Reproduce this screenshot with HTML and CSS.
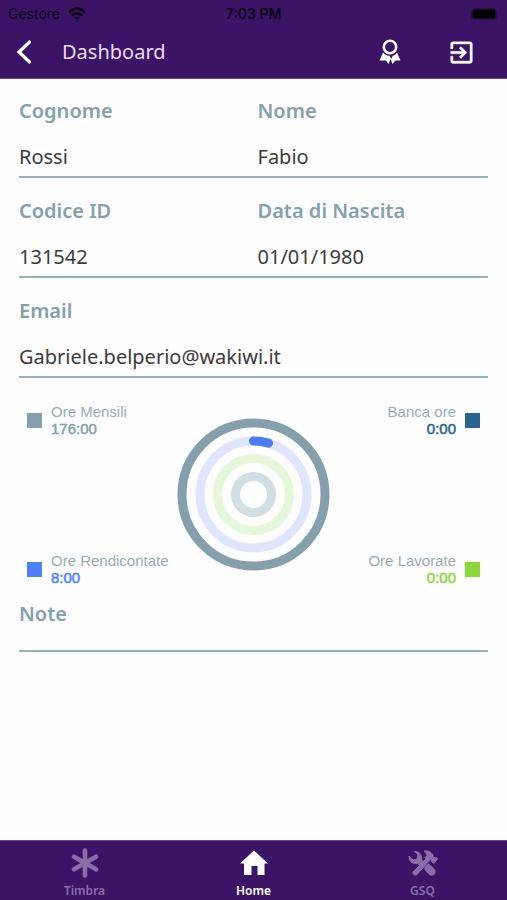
FILE: index.html
```html
<!DOCTYPE html>
<html lang="it">
<head>
<meta charset="utf-8">
<meta name="viewport" content="width=device-width, initial-scale=1">
<title>Dashboard</title>
<link rel="stylesheet" href="styles.css">
</head>
<body>
<header class="top">
  <div class="status">
    <span class="carrier">Gestore
      <svg width="18" height="14" viewBox="0 0 18 14" aria-hidden="true"><g fill="none" stroke="currentColor" stroke-width="2.6"><path d="M1 5.200Q9-2 17 5.200"/><path d="M4 8.600Q9 4 14 8.600"/></g><path d="M6.200 10.500Q9 8.400 11.800 10.500L9 13.400z" fill="currentColor"/></svg>
    </span>
    <span class="clock">7:03 PM</span>
    <span class="power"><svg width="28" height="12" viewBox="0 0 28 12" aria-hidden="true"><rect x=".5" y=".5" width="25" height="11" rx="3" fill="none" stroke="#000" opacity=".3"/><rect x="1.500" y="1.500" width="23" height="9" rx="1.500"/><path d="M26.500 4v4q1.500-2 0-4" opacity=".4"/></svg></span>
  </div>
  <div class="bar">
    <button class="icon-btn" type="button" aria-label="Indietro"><svg width="16" height="26" viewBox="0 0 16 26"><path d="M13.500 3L3 13l10.500 10" fill="none" stroke="#fff" stroke-width="3.200" stroke-linecap="round"/></svg></button>
    <h1>Dashboard</h1>
    <button class="icon-btn" type="button" aria-label="Certificati"><svg width="22" height="26" viewBox="0 0 22 26"><circle cx="11" cy="8" r="6.200" fill="none" stroke="#fff" stroke-width="2.600"/><path d="M4 13.500Q6 16.500 10.500 16.800L12 19.500 9.500 25 7 21.500.500 21.500z M18 13.500Q16.500 16 13.800 16.800L11.800 20.500 13.500 25 16.500 21.500 21.500 21.500z" fill="#fff"/></svg></button>
    <button class="icon-btn" type="button" aria-label="Esci"><svg width="29" height="29" viewBox="0 0 24 24"><path fill="#fff" stroke="#fff" stroke-width=".3" d="M10.090 15.590L11.500 17l5-5-5-5-1.410 1.410L12.670 11H3v2h9.670zM19 3H5c-1.110 0-2 .9-2 2v4h2V5h14v14H5v-4H3v4c0 1.100.890 2 2 2h14c1.100 0 2-.9 2-2V5c0-1.100-.9-2-2-2z"/></svg></button>
  </div>
</header>
<main>
  <div class="row">
    <div class="field"><label for="surname">Cognome</label><input id="surname" value="Rossi" readonly></div>
    <div class="field"><label for="name">Nome</label><input id="name" value="Fabio" readonly></div>
  </div>
  <div class="row">
    <div class="field"><label for="code">Codice ID</label><input id="code" value="131542" readonly></div>
    <div class="field"><label for="birth">Data di Nascita</label><input id="birth" value="01/01/1980" readonly></div>
  </div>
  <div class="row">
    <div class="field"><label for="email">Email</label><input id="email" type="email" value="Gabriele.belperio@wakiwi.it" readonly></div>
  </div>
  <section class="hours">
    <div class="legend">
      <div class="item monthly"><i></i><p>Ore Mensili<b>176:00</b></p></div>
      <div class="item reported"><i></i><p>Ore Rendicontate<b>8:00</b></p></div>
    </div>
    <svg class="rings" width="153" height="153" viewBox="-76.5 -76.5 153 153" fill="none" stroke-width="9" aria-hidden="true">
      <circle r="71.500" stroke="#84a0aa"/>
      <circle r="53.500" stroke="#dfe5ff"/>
      <circle r="36" stroke="#e6f6da"/>
      <circle r="18" stroke="#d3dde4"/>
      <path d="M0-53.500A53.500 53.500 0 0 1 15-51.350" stroke="#4c7cf5" stroke-linecap="round"/>
    </svg>
    <div class="legend right">
      <div class="item bank"><i></i><p>Banca ore<b>0:00</b></p></div>
      <div class="item worked"><i></i><p>Ore Lavorate<b>0:00</b></p></div>
    </div>
  </section>
  <div class="row notes">
    <div class="field"><label for="notes">Note</label><input id="notes"></div>
  </div>
</main>
<nav class="tabs">
  <a href="#timbra"><svg width="30" height="32" viewBox="0 0 30 32"><path d="M15 3.500v25M4 9.700l22 12.600M26 9.700l-22 12.600" stroke="currentColor" stroke-width="4.600" stroke-linecap="round"/></svg>Timbra</a>
  <a href="#home" class="active" aria-current="page"><svg width="30" height="32" viewBox="0 0 30 32"><path d="M15 3.500L29 16.500H25.500V28H18.500V19H12.500V28H5V16.500H1z" fill="currentColor"/></svg>Home</a>
  <a href="#gsq"><svg width="30" height="32" viewBox="0 0 30 32"><g fill="currentColor" stroke="currentColor" stroke-linejoin="round"><path d="M1 9C.5 14 4.500 17.500 9.500 16.500L12 18.500 15.500 15 13.500 12.500C14.500 8 11 4 6.500 4.500L10 8 9 12 5 13z"/><path d="M17.500 20.500L20.500 17.500 26.500 23.500Q27 25.500 25.500 27 24 28.200 22.500 27.500L17.500 22.500z" stroke-width="2"/><path d="M16 4.300Q21 2.500 25 8V9.800L27 11 28.500 10.500 29.500 12 26 16.500 23.500 14.500V13L22.500 12.500 9 27.500Q6.500 29 5 27V25L18 12 17 10.500 19 8.500Q18.800 6 16 4.300z"/></g></svg>GSQ</a>
</nav>
</body>
</html>
```

FILE: styles.css
```css
* { box-sizing: border-box; }
body {
  margin: 0;
  min-height: 100vh;
  display: flex;
  flex-direction: column;
  background: #fefefe;
  color: #3b3b3b;
  font-family: "Noto Sans", sans-serif;
}
.top { background: #3b1466; border-bottom: 1px solid #64468a; }
.status {
  display: grid;
  grid-template-columns: 1fr auto 1fr;
  align-items: center;
  height: 28px;
  padding: 0 8px;
  color: #0b0416;
  font: 14px/20px Inter, sans-serif;
}
.carrier { display: flex; align-items: center; gap: 8px; }
.clock { font-weight: 600; }
.power { display: flex; justify-content: flex-end; }
.bar { display: flex; align-items: center; height: 50px; padding: 0 31px 2px 16px; }
.icon-btn { display: flex; padding: 0; border: 0; background: none; }
.icon-btn + .icon-btn { margin-left: 46px; }
h1 {
  flex: 1;
  margin: 0 0 0 30px;
  color: #eadcf3;
  font-size: 20px;
  font-weight: 400;
  line-height: 28px;
}
main { flex: 1; padding: 0 19px; }
.row {
  display: flex;
  gap: 8px;
  padding: 20px 0 4px;
  border-bottom: 2px solid #9bb1b8;
}
.row + .row { padding-top: 21px; }
.field { flex: 1; min-width: 0; display: flex; flex-direction: column; gap: 17px; }
label { color: #84a0ab; font-size: 20px; font-weight: 600; line-height: 24px; }
input {
  width: 100%;
  height: 32px;
  padding: 0;
  border: 0;
  outline: 0;
  background: none;
  color: inherit;
  font: inherit;
  font-size: 20px;
}
.hours {
  display: grid;
  grid-template-columns: 1fr auto 1fr;
  align-items: center;
  padding: 25px 8px 0;
}
.rings { margin: 15px 0; }
.legend {
  align-self: stretch;
  display: flex;
  flex-direction: column;
  justify-content: space-between;
  font: 15px/17px "Liberation Sans", sans-serif;
  white-space: nowrap;
}
.item { display: flex; align-items: center; gap: 9px; }
.item p { margin: 0; color: #9aabb1; }
.item i { width: 15px; height: 15px; background: var(--tone); }
.item b { display: block; color: var(--tone); font-weight: 400; -webkit-text-stroke: 0.5px; }
.right .item { flex-direction: row-reverse; text-align: right; }
.monthly { --tone: #84a0aa; }
.reported { --tone: #4c80ff; }
.bank { --tone: #286490; }
.worked { --tone: #88d938; }
.notes { padding-top: 16px; }
.notes .field { gap: 0; }
.notes input { height: 20px; }
.tabs { display: flex; height: 60px; background: #3b1466; border-top: 1px solid #64468a; }
.tabs a {
  flex: 1;
  display: flex;
  flex-direction: column;
  align-items: center;
  gap: 4px;
  padding-top: 6px;
  color: #8a6cab;
  font-size: 12px;
  font-weight: 600;
  line-height: 16px;
  text-decoration: none;
}
.tabs .active { color: #fff; }
```
